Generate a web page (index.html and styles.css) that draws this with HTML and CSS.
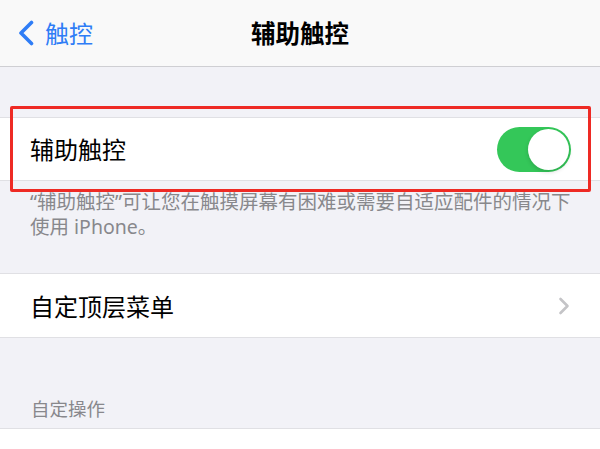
FILE: index.html
```html
<!DOCTYPE html>
<html lang="zh-CN">
<head>
<meta charset="utf-8">
<link rel="stylesheet" href="styles.css">
</head>
<body>
<div class="screen">
  <header class="nav">
    <div class="back">
      <svg class="back-icon" width="18" height="26" viewBox="0 0 18 26"><path d="M14.5 2.5 L4 13 L14.5 23.5" fill="none" stroke="#2f7df6" stroke-width="3.6" stroke-linecap="round" stroke-linejoin="round"/></svg>
      <span class="back-text">触控</span>
    </div>
    <h1 class="title">辅助触控</h1>
  </header>

  <section class="group first">
    <div class="cell">
      <span class="cell-label">辅助触控</span>
      <div class="toggle"><div class="knob"></div></div>
    </div>
    <div class="highlight"></div>
  </section>
  <p class="footer">“辅助触控”可让您在触摸屏幕有困难或需要自适应配件的情况下使用 iPhone。</p>

  <section class="group second">
    <div class="cell">
      <span class="cell-label">自定顶层菜单</span>
      <svg class="chevron" width="12" height="18" viewBox="0 0 12 18"><path d="M2.5 2 L9.5 9 L2.5 16" fill="none" stroke="#c4c4c7" stroke-width="2.6" stroke-linecap="round" stroke-linejoin="round"/></svg>
    </div>
  </section>

  <p class="header">自定操作</p>
  <section class="group third">
    <div class="cell"></div>
  </section>
</div>
</body>
</html>
```

FILE: styles.css
```css
* { box-sizing: border-box; }
html, body { margin: 0; padding: 0; }
body {
  width: 600px;
  height: 449px;
  overflow: hidden;
  background: #f2f2f7;
  font-family: "Noto Sans", "Noto Sans CJK SC", sans-serif;
  color: #000;
}
.screen { display: flex; flex-direction: column; }

.nav {
  height: 67px;
  background: #f9f9f9;
  border-bottom: 1px solid #cfcfd3;
  display: flex;
  align-items: center;
  position: relative;
}
.back {
  display: flex;
  align-items: center;
  padding-left: 17px;
  gap: 10px;
  margin-top: -1px;
}
.back-text {
  font-family: "Noto Sans CJK SC", sans-serif;
  font-size: 24px;
  color: #2f7df6;
  line-height: 1;
}
.title {
  position: absolute;
  left: 0; right: 0;
  top: 0; bottom: 0;
  margin: 0;
  display: flex;
  align-items: center;
  justify-content: center;
  font-family: "Noto Sans CJK SC", sans-serif;
  font-size: 24.5px;
  font-weight: 700;
  margin-top: -2px;
  pointer-events: none;
}

.group {
  background: #fff;
  border-top: 1px solid #e0e0e4;
  border-bottom: 1px solid #e0e0e4;
  position: relative;
}
.group.first { margin-top: 50px; }
.group.second { margin-top: 34px; }
.cell {
  height: 62px;
  display: flex;
  align-items: center;
  justify-content: space-between;
  padding-left: 30px;
  padding-right: 29px;
}
.cell-label {
  font-family: "Noto Sans CJK SC", sans-serif;
  font-size: 24px;
  line-height: 1;
}
.toggle {
  width: 74px;
  height: 45px;
  border-radius: 23px;
  background: #34c759;
  position: relative;
}
.knob {
  position: absolute;
  right: 2px;
  top: 2px;
  width: 41px;
  height: 41px;
  border-radius: 50%;
  background: #fff;
  box-shadow: 0 2px 4px rgba(0,0,0,0.15);
}
.second .cell { height: 63px; padding-right: 30px; }

.highlight {
  position: absolute;
  left: 10px;
  top: -12px;
  width: 581px;
  height: 86px;
  border: 3px solid #ee2a24;
  border-radius: 2px;
}

.footer {
  margin: 0;
  padding: 8px 16px 0 30px;
  font-size: 19.5px;
  line-height: 25px;
  color: #88888c;
}
.header {
  margin: 0;
  padding: 58px 31px 7px 31px;
  font-family: "Noto Sans CJK SC", sans-serif;
  font-size: 18.5px;
  line-height: 25px;
  color: #88888c;
}
.group.third .cell { height: 40px; }
```
